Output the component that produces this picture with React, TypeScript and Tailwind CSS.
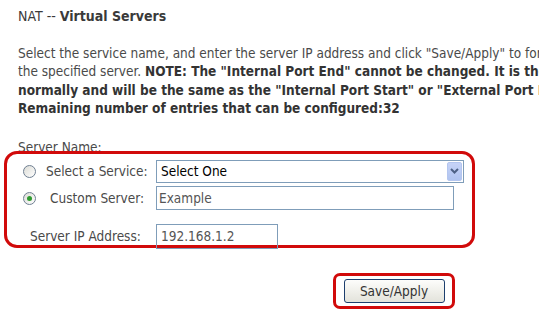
import React from "react";

const font = { fontFamily: '"DejaVu Sans Condensed", "DejaVu Sans", sans-serif' };

function Radio({ checked }: { checked?: boolean }) {
  return (
    <div className="w-[13px] h-[13px] rounded-full border border-[#6f7f92] bg-gradient-to-br from-[#dcdcd6] to-[#ffffff] flex items-center justify-center shrink-0">
      {checked && <div className="w-[5px] h-[5px] rounded-full bg-[#2f9a2f]" />}
    </div>
  );
}

export default function App() {
  return (
    <div
      className="w-[539px] h-[318px] overflow-hidden bg-white text-[#4a4a4a] text-[13.5px] leading-[18.4px] relative"
      style={font}
    >
      <div className="pl-[18px] pt-[7px] text-[14px] leading-[18px] text-[#3a3a3a] whitespace-nowrap">
        NAT -- <span className="font-semibold">Virtual Servers</span>
      </div>
      <div className="pl-[18px] mt-[19px] whitespace-nowrap">
        <div>Select the service name, and enter the server IP address and click "Save/Apply" to forward IP packets for this service to</div>
        <div>
          the specified server.{" "}
          <span className="font-bold text-[#333]">NOTE: The "Internal Port End" cannot be changed. It is the same as "External Port End"</span>
        </div>
        <div className="font-bold text-[#333]">normally and will be the same as the "Internal Port Start" or "External Port End" if either one is modified.</div>
        <div className="font-bold text-[#333]">Remaining number of entries that can be configured:32</div>
      </div>
      <div className="pl-[18px] mt-[20px] whitespace-nowrap">Server Name:</div>
      <div className="ml-[4px] mt-[-5px] w-[471px] h-[97px] border-[3px] border-[#d10a0a] rounded-[13px] relative">
        <div className="flex items-center h-[26px] mt-[4px]">
          <div className="w-[29px] flex justify-end">
            <Radio />
          </div>
          <div className="ml-[10px] w-[110px] whitespace-nowrap">Select a Service:</div>
          <div className="w-[308px] h-[23px] border border-[#7f9db9] flex items-center justify-between pl-[4px] pr-[1px] text-black">
            <span>Select One</span>
            <div className="w-[15px] h-[19px] rounded-[2px] bg-gradient-to-b from-[#c6d3f7] to-[#b0c4f0] border border-[#b4c6ef] flex items-center justify-center">
              <svg width="9" height="6" viewBox="0 0 9 6">
                <path d="M1 1 L4.5 4.5 L8 1" stroke="#4d6185" strokeWidth="2" fill="none" />
              </svg>
            </div>
          </div>
        </div>
        <div className="flex items-center h-[26px] mt-[1px]">
          <div className="w-[29px] flex justify-end">
            <Radio checked />
          </div>
          <div className="ml-[14px] w-[106px] whitespace-nowrap">Custom Server:</div>
          <div className="w-[298px] h-[24px] border border-[#7f9db9] flex items-center pl-[2px] text-[#555]">
            Example
          </div>
        </div>
        <div className="flex items-center h-[26px] mt-[12px]">
          <div className="ml-[23px] w-[126px] whitespace-nowrap">Server IP Address:</div>
          <div className="w-[122px] h-[25px] border border-[#7f9db9] flex items-center pl-[4px] text-[#555]">
            192.168.1.2
          </div>
        </div>
      </div>
      <div className="ml-[333px] mt-[25px] w-[122px] h-[36px] border-[3px] border-[#d10a0a] rounded-[7px] flex items-center justify-center">
        <div className="w-[101px] h-[24px] rounded-[3px] border border-[#1c3f6e] bg-gradient-to-b from-[#fdfdfb] to-[#e3e3db] flex items-center justify-center text-[#333]">
          Save/Apply
        </div>
      </div>
    </div>
  );
}
